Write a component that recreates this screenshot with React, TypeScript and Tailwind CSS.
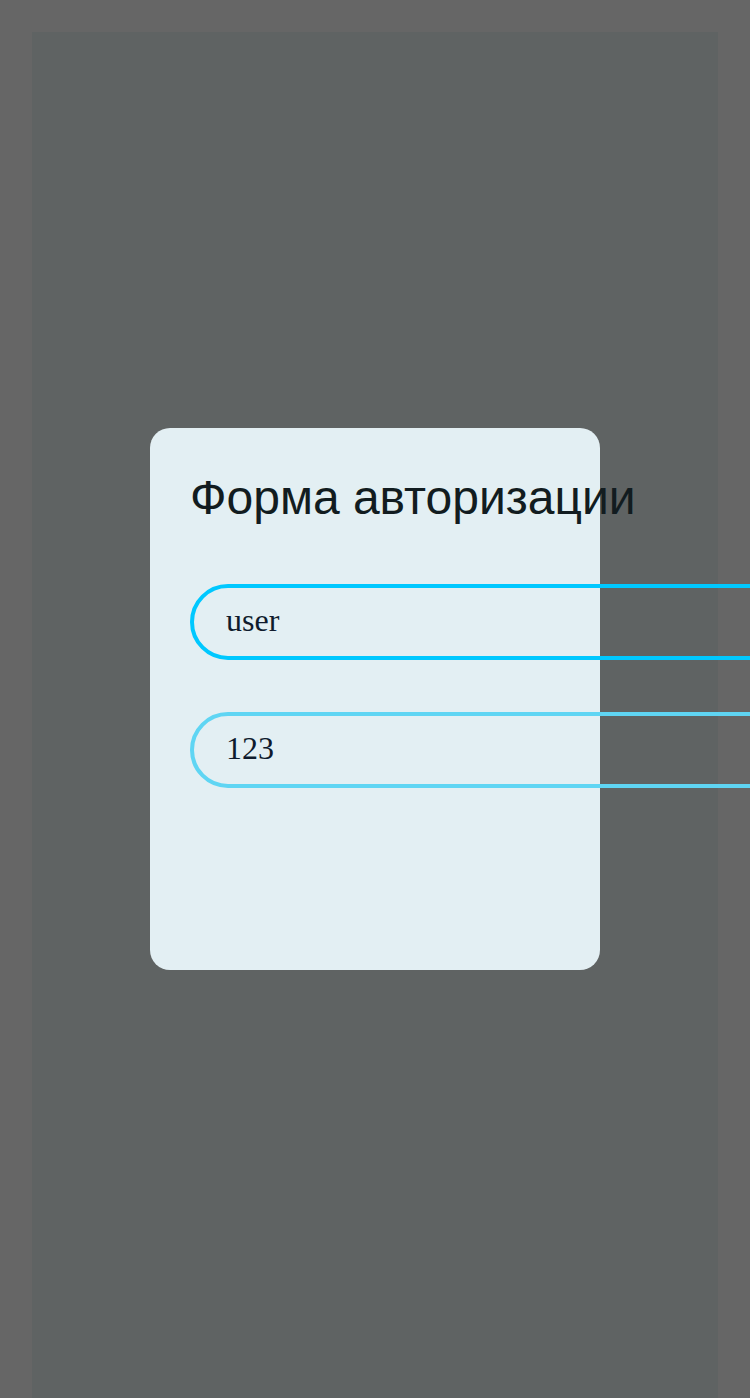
export default function App() {
  return (
    <div className="h-[1398px] overflow-hidden bg-[#666666] px-8 pt-8">
      <div className="flex h-full items-center justify-center bg-[#5f6363] pb-8">
        <div className="h-[542px] w-[450px] shrink-0 rounded-[20px] bg-[#e3eff3] pl-10 pt-[46px]">
          <h1 className="whitespace-nowrap font-['Liberation_Sans',Arial,sans-serif] text-[48px] leading-none text-[#121c20]">
            Форма авторизации
          </h1>
          <input
            readOnly
            value="user"
            className="mt-[62px] block h-[76px] w-[600px] rounded-full border-4 border-[#00c8ff] bg-transparent pb-[4px] pl-8 font-['Liberation_Serif','Times_New_Roman',serif] text-[32px] text-[#0f1b2d] outline-none"
          />
          <input
            readOnly
            value="123"
            className="mt-[52px] block h-[76px] w-[600px] rounded-full border-4 border-[#5fd5f3] bg-transparent pb-[4px] pl-8 font-['Liberation_Serif','Times_New_Roman',serif] text-[32px] text-[#0f1b2d] outline-none"
          />
        </div>
      </div>
    </div>
  );
}
